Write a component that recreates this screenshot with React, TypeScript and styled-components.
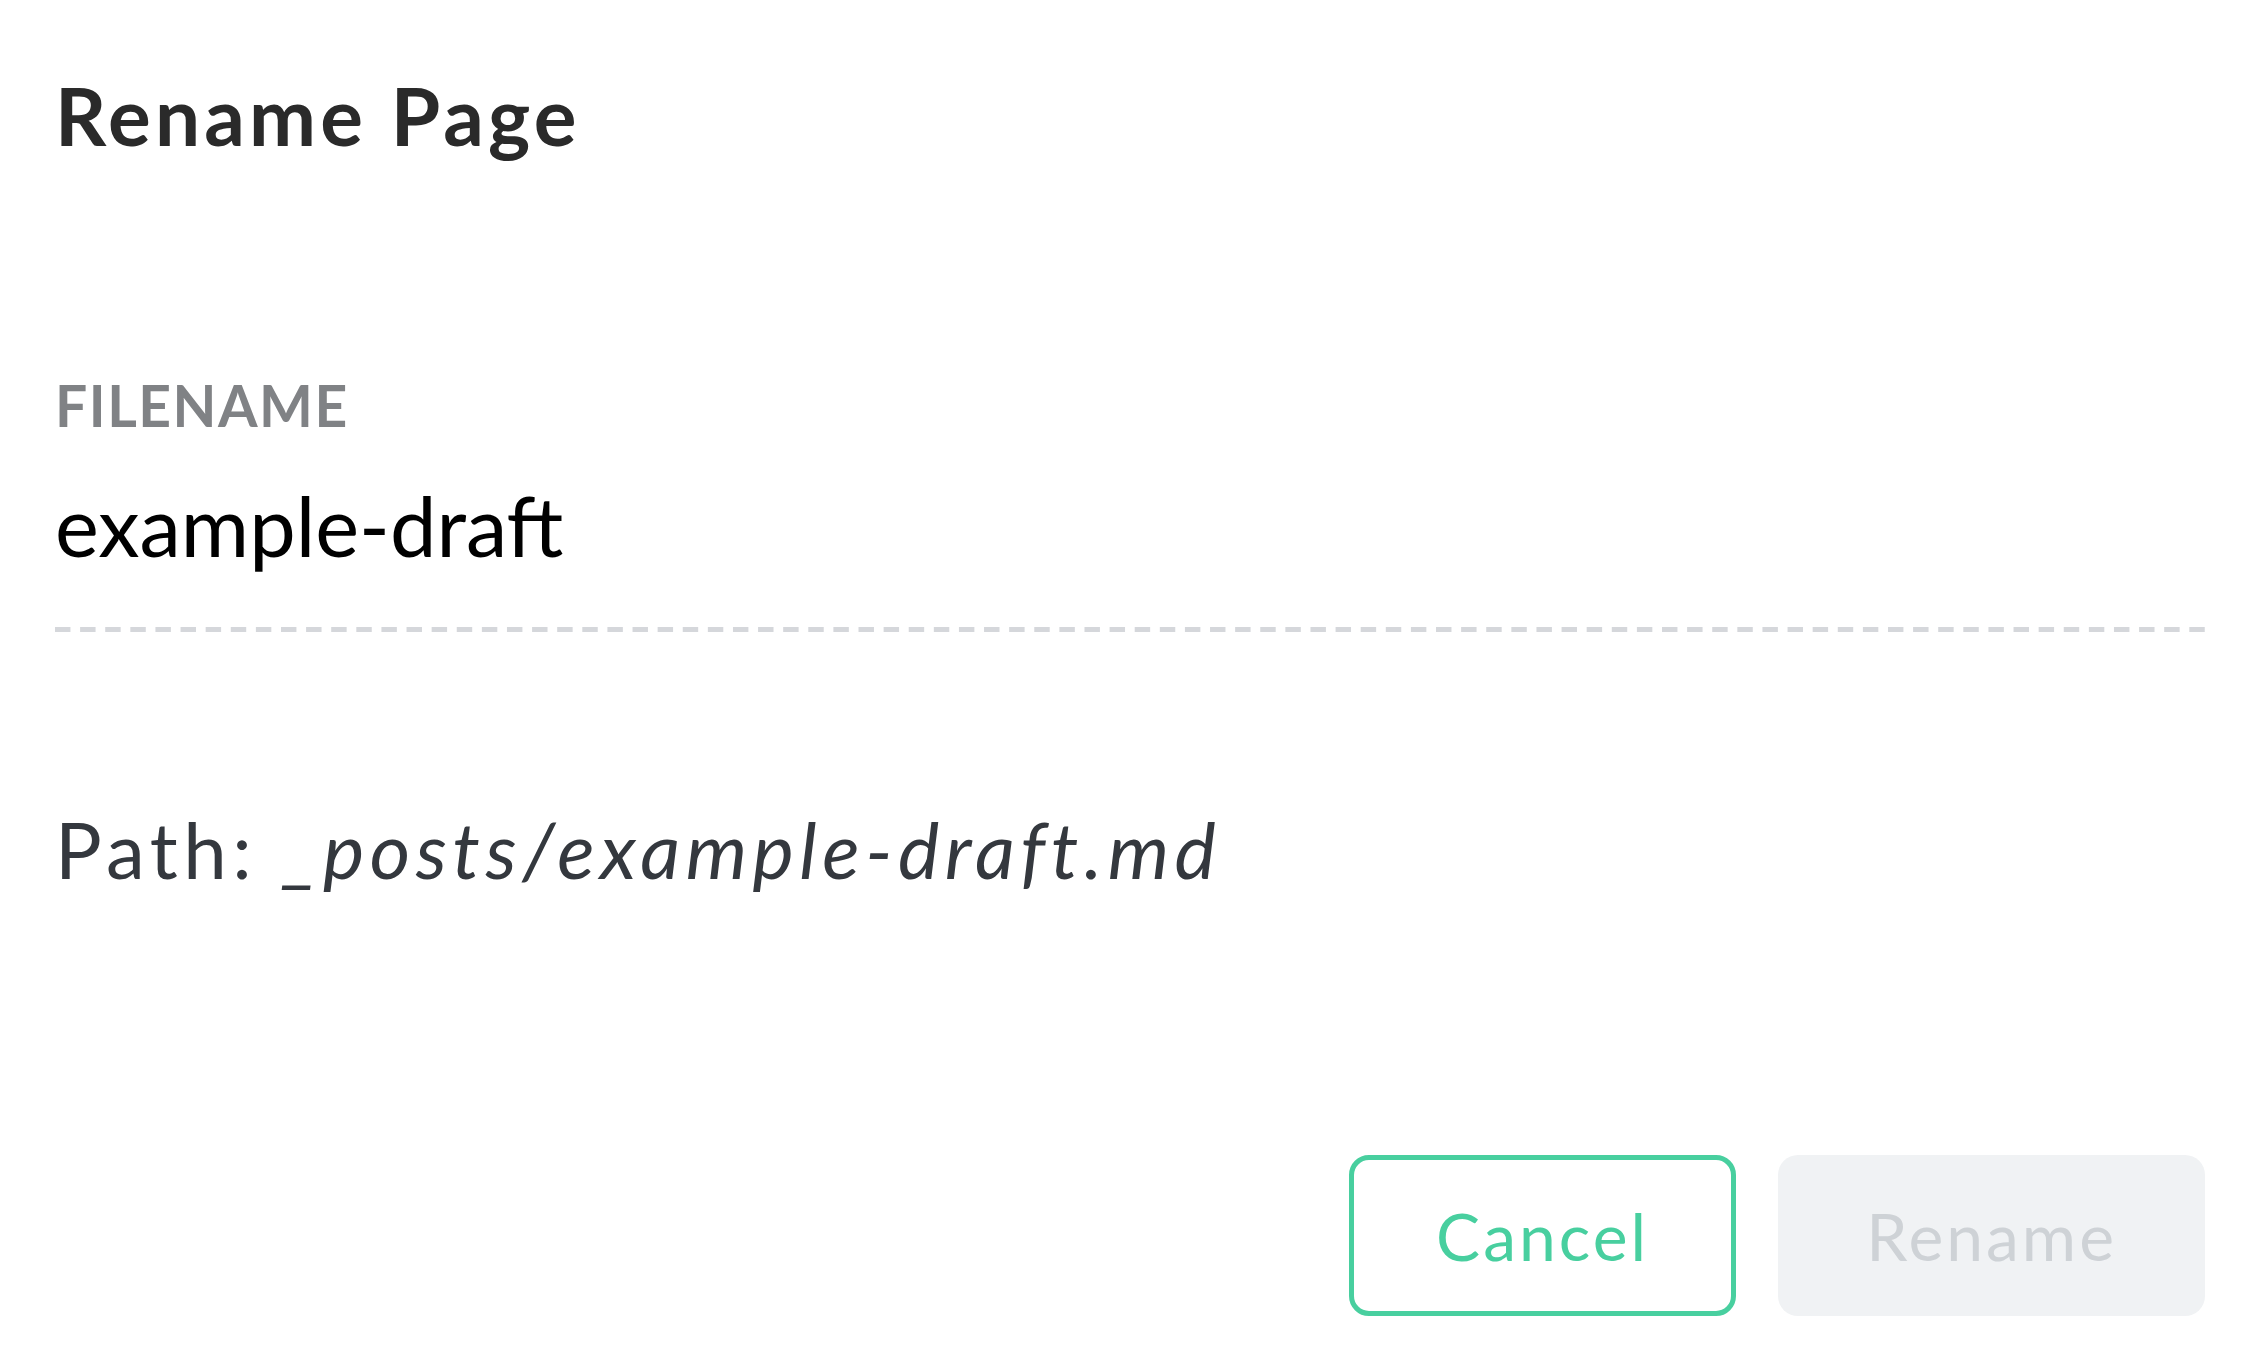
import React from "react";
import styled, { createGlobalStyle } from "styled-components";

const GlobalStyle = createGlobalStyle`
  html, body {
    margin: 0;
    padding: 0;
    background: #ffffff;
  }
  body {
    font-family: Lato, "Noto Sans", "Open Sans", sans-serif;
    -webkit-font-smoothing: antialiased;
  }
  * { box-sizing: border-box; }
`;

const Page = styled.div`
  min-height: 100vh;
  display: flex;
  flex-direction: column;
  padding: 75px 47px 0 55px;
  background: #ffffff;
`;

const Title = styled.h1`
  margin: 0;
  font-size: 80px;
  line-height: 1;
  font-weight: 700;
  letter-spacing: 4.2px;
  color: #2a2a2a;
`;

const Field = styled.section`
  display: flex;
  flex-direction: column;
  margin-top: 222px;
`;

const Label = styled.label`
  font-size: 57px;
  line-height: 1;
  font-weight: 700;
  letter-spacing: 1.5px;
  color: #808285;
  text-transform: uppercase;
`;

const Value = styled.div`
  margin-top: 50px;
  font-size: 83px;
  line-height: 1;
  font-weight: 400;
  color: #000000;
`;

const Dashed = styled.div`
  margin-top: 60px;
  height: 5px;
  width: 100%;
  background-image: linear-gradient(to right, #d5d7db 60%, transparent 60%);
  background-size: calc((100% + 10px) / 86) 100%;
  background-repeat: repeat-x;
`;

const PathLine = styled.p`
  margin: 178px 0 0;
  font-size: 78px;
  line-height: 1;
  font-weight: 400;
  letter-spacing: 5.5px;
  color: #34383e;
`;

const PathValue = styled.em`
  font-style: italic;
`;

const Actions = styled.div`
  margin-top: 267px;
  display: flex;
  justify-content: flex-end;
  gap: 42px;
`;

const Button = styled.button<{ $variant: "outline" | "disabled" }>`
  height: 161px;
  padding: 0 ${(p) => (p.$variant === "outline" ? 82 : 88)}px;
  border-radius: 20px;
  display: flex;
  align-items: center;
  justify-content: center;
  font-family: Lato, "Noto Sans", sans-serif;
  font-size: 66px;
  line-height: 1;
  font-weight: 400;
  letter-spacing: 3px;
  cursor: ${(p) => (p.$variant === "disabled" ? "default" : "pointer")};
  border: ${(p) => (p.$variant === "outline" ? "5px solid #48cf9f" : "none")};
  background: ${(p) => (p.$variant === "outline" ? "#ffffff" : "#f0f2f4")};
  color: ${(p) => (p.$variant === "outline" ? "#48cf9f" : "#ced2d6")};
`;

export default function App() {
  return (
    <>
      <GlobalStyle />
      <Page>
        <Title>Rename Page</Title>
        <Field>
          <Label>Filename</Label>
          <Value>example-draft</Value>
          <Dashed />
        </Field>
        <PathLine>
          Path: <PathValue>_posts/example-draft.md</PathValue>
        </PathLine>
        <Actions>
          <Button $variant="outline">Cancel</Button>
          <Button $variant="disabled" disabled>
            Rename
          </Button>
        </Actions>
      </Page>
    </>
  );
}
